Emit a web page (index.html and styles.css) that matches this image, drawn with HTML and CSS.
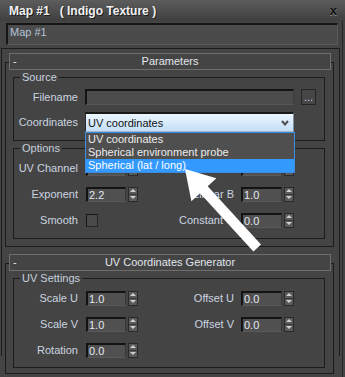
FILE: index.html
```html
<!DOCTYPE html>
<html>
<head>
<meta charset="utf-8">
<link rel="stylesheet" href="styles.css">
</head>
<body>
<div class="titlebar">
  <span class="title">Map #1&nbsp;&nbsp; ( Indigo Texture )</span>
  <span class="close">x</span>
</div>
<div class="main">
  <div class="namebar"><div class="namefield">Map #1</div></div>
  <div class="panel">
    <div class="rollout">
      <div class="rhead"><span class="minus">-</span><span class="rtitle">Parameters</span></div>
      <div class="group group-source">
        <div class="gtitle">Source</div>
        <div class="row">
          <span class="lab">Filename</span>
          <div class="textfield"></div>
          <div class="browse">...</div>
        </div>
        <div class="row row-select">
          <span class="lab">Coordinates</span>
          <div class="select">
            <span>UV coordinates</span>
            <svg class="chev" width="8" height="6" viewBox="0 0 8 6"><polyline points="1,1 4,4.5 7,1" fill="none" stroke="#505050" stroke-width="2"/></svg>
            <ul class="list">
              <li>UV coordinates</li>
              <li>Spherical environment probe</li>
              <li class="sel">Spherical (lat / long)</li>
            </ul>
          </div>
        </div>
      </div>
      <div class="group">
        <div class="gtitle">Options</div>
        <div class="row">
          <span class="lab">UV Channel</span>
          <div class="num"></div><div class="spinner"><span class="up"></span><span class="down"></span></div>
          <span class="lab-r"></span>
          <div class="num num-r"></div><div class="spinner"><span class="up"></span><span class="down"></span></div>
        </div>
        <div class="row">
          <span class="lab">Exponent</span>
          <div class="num">2.2</div><div class="spinner"><span class="up"></span><span class="down"></span></div>
          <span class="lab-r">Linear B</span>
          <div class="num num-r">1.0</div><div class="spinner"><span class="up"></span><span class="down"></span></div>
        </div>
        <div class="row">
          <span class="lab">Smooth</span>
          <div class="check"></div>
          <span class="lab-r lab-r-check">Constant C</span>
          <div class="num num-r">0.0</div><div class="spinner"><span class="up"></span><span class="down"></span></div>
        </div>
      </div>
    </div>
    <div class="rollout rollout-2">
      <div class="rhead"><span class="minus">-</span><span class="rtitle">UV Coordinates Generator</span></div>
      <div class="group group-uv">
        <div class="gtitle">UV Settings</div>
        <div class="row">
          <span class="lab">Scale U</span>
          <div class="num">1.0</div><div class="spinner"><span class="up"></span><span class="down"></span></div>
          <span class="lab-r">Offset U</span>
          <div class="num num-r">0.0</div><div class="spinner"><span class="up"></span><span class="down"></span></div>
        </div>
        <div class="row">
          <span class="lab">Scale V</span>
          <div class="num">1.0</div><div class="spinner"><span class="up"></span><span class="down"></span></div>
          <span class="lab-r">Offset V</span>
          <div class="num num-r">0.0</div><div class="spinner"><span class="up"></span><span class="down"></span></div>
        </div>
        <div class="row">
          <span class="lab">Rotation</span>
          <div class="num">0.0</div><div class="spinner"><span class="up"></span><span class="down"></span></div>
        </div>
      </div>
    </div>
  </div>
</div>
<svg class="arrow" width="345" height="377" viewBox="0 0 345 377">
  <polygon points="185,169 216.4,178.2 207.7,186.2 261,244.5 253.4,251.5 200.1,193.2 191.4,201.2" fill="#ffffff"/>
</svg>
</body>
</html>
```
FILE: styles.css
```css
* { box-sizing: border-box; }

body {
  margin: 0;
  width: 345px;
  height: 377px;
  overflow: hidden;
  position: relative;
  background: #444444;
  font: 11px "Liberation Sans", Arial, sans-serif;
  color: #cbd4e0;
}

.titlebar {
  height: 21px;
  display: flex;
  align-items: center;
  justify-content: space-between;
  padding: 0 8px 0 9px;
  background: linear-gradient(#5c5c5c, #3f3f3f);
}

.title {
  font-weight: bold;
  font-size: 12px;
  color: #f0f0f0;
  white-space: pre;
  text-shadow: 1px 1px 0 #1e1e1e;
}

.close {
  font-weight: bold;
  font-size: 13px;
  color: #111111;
  text-shadow: 0 1px 0 #8a8a8a;
}

.main {
  margin-right: 2px;
  border-right: 1px solid #262626;
  height: 356px;
}

.namebar {
  padding: 2px 4px 3px 6px;
}

.namefield {
  height: 22px;
  background: #4b4b4b;
  border-top: 2px solid #151515;
  border-left: 2px solid #151515;
  border-right: 1px solid #5a5a5a;
  border-bottom: 1px solid #5a5a5a;
  padding-left: 2px;
  line-height: 14px;
  color: #b4c4d8;
}

.panel {
  margin: 0 2px 0 1px;
  border: 1px solid #1c1c1c;
  border-bottom: none;
  height: 308px;
}

.rollout {
  margin: 13px 5px 0 3px;
  border: 1px solid #1c1c1c;
  padding-bottom: 7px;
}

.rollout-2 {
  margin-top: 16px;
  padding-bottom: 5px;
}

.rhead {
  position: relative;
  height: 17px;
  margin: -10px 2px 0 3px;
  border: 1px solid #6e6e6e;
  background: #444444;
  display: grid;
  grid-template-columns: 20px 1fr 20px;
  align-items: center;
  color: #e2e6ec;
  line-height: 13px;
}

.minus {
  padding-left: 3px;
}

.rtitle {
  text-align: center;
  white-space: nowrap;
}

.group {
  margin: 7px 8px 0 7px;
  border: 1px solid #1c1c1c;
  padding-bottom: 5px;
}

.group-source {
  padding-bottom: 6px;
}

.group-uv {
  padding-bottom: 4px;
}

.gtitle {
  width: fit-content;
  margin: -7px 0 0 6px;
  padding: 0 2px;
  background: #444444;
  line-height: 13px;
  color: #c4d0de;
}

.row {
  display: flex;
  align-items: center;
  height: 26px;
}

.row-select {
  height: 24px;
}

.lab {
  flex: none;
  width: 64px;
  margin-right: 8px;
  text-align: right;
  white-space: nowrap;
}

.lab-r {
  flex: none;
  width: 96px;
  margin-right: 7px;
  text-align: right;
  white-space: nowrap;
}

.lab-r-check {
  width: 136px;
}

.textfield {
  width: 209px;
  height: 16px;
  margin-left: -1px;
  background: #4c4c4c;
  border-top: 2px solid #141414;
  border-left: 2px solid #141414;
  border-right: 1px solid #3c3c3c;
  border-bottom: 1px solid #565656;
}

.browse {
  width: 15px;
  height: 16px;
  margin-left: 7px;
  border: 1px solid #252525;
  background: #464646;
  color: #cdd0e0;
  text-align: center;
  line-height: 14px;
}

.select {
  position: relative;
  width: 209px;
  height: 20px;
  margin-left: -1px;
  display: flex;
  align-items: center;
  justify-content: space-between;
  padding: 0 4px 0 2px;
  border-top: 2px solid #1a1a1a;
  border-left: 1px solid #2a2a2a;
  border-right: 1px solid #7d8fa0;
  border-bottom: 1px solid #9fb4c8;
  background: linear-gradient(#ecf6ff, #c4dff7);
  color: #121212;
}

.chev {
  display: block;
  margin-top: 1px;
}

.list {
  position: absolute;
  left: -1px;
  top: calc(100% + 1px);
  width: 210px;
  margin: 0;
  padding: 0;
  list-style: none;
  border: 1px solid #3a8ce0;
  background: #4f4f4f;
  color: #ececec;
  z-index: 5;
}

.list li {
  height: 13px;
  line-height: 13px;
  padding-left: 2px;
  white-space: nowrap;
}

.list li.sel {
  background: #3399ff;
  color: #ffffff;
}

.num {
  flex: none;
  width: 40px;
  height: 15px;
  padding-left: 1px;
  background: #505050;
  border-top: 2px solid #131313;
  border-left: 2px solid #131313;
  border-right: 1px solid #383838;
  border-bottom: 1px solid #5a5a5a;
  color: #e2e8f0;
  line-height: 12px;
}

.num-r {
  width: 41px;
}

.spinner {
  flex: none;
  width: 10px;
  height: 15px;
  margin-left: 2px;
  display: flex;
  flex-direction: column;
  border: 1px solid #2a2a2a;
  background: #5a5a5a;
}

.spinner span {
  flex: 1;
  display: flex;
  align-items: center;
  justify-content: center;
}

.spinner span + span {
  border-top: 1px solid #383838;
}

.up::before {
  content: "";
  border-left: 3px solid transparent;
  border-right: 3px solid transparent;
  border-bottom: 3px solid #cfcfcf;
}

.down::before {
  content: "";
  border-left: 3px solid transparent;
  border-right: 3px solid transparent;
  border-top: 3px solid #cfcfcf;
}

.check {
  flex: none;
  width: 12px;
  height: 13px;
  border: 1px solid #262626;
  border-top-color: #161616;
  border-left-color: #161616;
  background: #4a4a4a;
}

.arrow {
  position: absolute;
  left: 0;
  top: 0;
  z-index: 10;
  pointer-events: none;
}
```
